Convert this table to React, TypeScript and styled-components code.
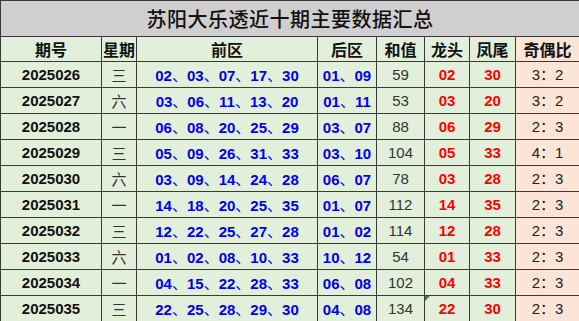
import styled, { createGlobalStyle, css } from "styled-components";

const GlobalStyle = createGlobalStyle`
  body {
    margin: 0;
    background: #fff;
    font-family: "Liberation Sans", "Noto Sans CJK SC", sans-serif;
  }
`;

const Table = styled.table`
  border-collapse: collapse;
  table-layout: fixed;
  width: 579px;
`;

const TitleCell = styled.td`
  height: 35px;
  padding: 0;
  background: #d0cece;
  border: 1px solid #3a3a3a;
  text-align: center;
  font-family: "Noto Sans CJK SC", sans-serif;
  font-size: 20px;
  font-weight: 500;
  color: #111;
  letter-spacing: 0.5px;
`;

const HeadCell = styled.th<{ $pink?: boolean }>`
  height: 24px;
  padding: 0;
  background: ${(p) => (p.$pink ? "#fce4d6" : "#e2efda")};
  border: 1px solid #3a3a3a;
  text-align: center;
  font-family: "Noto Sans CJK SC", sans-serif;
  font-size: 16px;
  font-weight: 700;
  color: #111;
  line-height: 1;
`;

type Tone = "date" | "week" | "blue" | "sum" | "red" | "ratio";

const toneStyles: Record<Tone, ReturnType<typeof css>> = {
  date: css`
    color: #111;
    font-weight: 700;
  `,
  week: css`
    color: #333;
    font-family: "Noto Sans CJK SC", sans-serif;
    font-weight: 400;
  `,
  blue: css`
    color: #0000f0;
    font-weight: 700;
  `,
  sum: css`
    color: #333;
    font-weight: 400;
  `,
  red: css`
    color: #ff0000;
    font-weight: 700;
  `,
  ratio: css`
    color: #222;
    font-weight: 400;
  `,
};

const Cell = styled.td<{ $tone: Tone; $pink?: boolean; $note?: boolean }>`
  position: relative;
  height: 25px;
  padding: 0;
  background: ${(p) => (p.$pink ? "#fce4d6" : "#e2efda")};
  border: 1px solid #3a3a3a;
  text-align: center;
  font-size: 15px;
  line-height: 1;
  white-space: nowrap;
  ${(p) => toneStyles[p.$tone]}

  ${(p) =>
    p.$note &&
    css`
      &::before {
        content: "";
        position: absolute;
        left: 0;
        top: 0;
        border-top: 5px solid #2e8b2e;
        border-right: 5px solid transparent;
      }
    `}
`;

const Sep = styled.span`
  font-family: "Noto Sans CJK SC", sans-serif;
  font-weight: 400;
`;

type Row = {
  issue: string;
  week: string;
  front: string[];
  back: string[];
  sum: number;
  head: string;
  tail: string;
  ratio: string;
};

const rows: Row[] = [
  { issue: "2025026", week: "三", front: ["02", "03", "07", "17", "30"], back: ["01", "09"], sum: 59, head: "02", tail: "30", ratio: "3：2" },
  { issue: "2025027", week: "六", front: ["03", "06", "11", "13", "20"], back: ["01", "11"], sum: 53, head: "03", tail: "20", ratio: "3：2" },
  { issue: "2025028", week: "一", front: ["06", "08", "20", "25", "29"], back: ["03", "07"], sum: 88, head: "06", tail: "29", ratio: "2：3" },
  { issue: "2025029", week: "三", front: ["05", "09", "26", "31", "33"], back: ["03", "10"], sum: 104, head: "05", tail: "33", ratio: "4：1" },
  { issue: "2025030", week: "六", front: ["03", "09", "14", "24", "28"], back: ["06", "07"], sum: 78, head: "03", tail: "28", ratio: "2：3" },
  { issue: "2025031", week: "一", front: ["14", "18", "20", "25", "35"], back: ["01", "07"], sum: 112, head: "14", tail: "35", ratio: "2：3" },
  { issue: "2025032", week: "三", front: ["12", "22", "25", "27", "28"], back: ["01", "02"], sum: 114, head: "12", tail: "28", ratio: "2：3" },
  { issue: "2025033", week: "六", front: ["01", "02", "08", "10", "33"], back: ["10", "12"], sum: 54, head: "01", tail: "33", ratio: "2：3" },
  { issue: "2025034", week: "一", front: ["04", "15", "22", "28", "33"], back: ["06", "08"], sum: 102, head: "04", tail: "33", ratio: "2：3" },
  { issue: "2025035", week: "三", front: ["22", "25", "28", "29", "30"], back: ["04", "08"], sum: 134, head: "22", tail: "30", ratio: "2：3" },
];

const widths = [101, 35, 181, 59, 48, 45, 46, 64];

const joinNums = (nums: string[]) =>
  nums.map((n, i) => (
    <span key={i}>
      {i > 0 && <Sep>、</Sep>}
      {n}
    </span>
  ));

const App = () => {
  return (
    <>
      <GlobalStyle />
      <Table>
        <colgroup>
          {widths.map((w, i) => (
            <col key={i} style={{ width: w }} />
          ))}
        </colgroup>
        <tbody>
          <tr>
            <TitleCell colSpan={8}>苏阳大乐透近十期主要数据汇总</TitleCell>
          </tr>
          <tr>
            <HeadCell>期号</HeadCell>
            <HeadCell>星期</HeadCell>
            <HeadCell>前区</HeadCell>
            <HeadCell>后区</HeadCell>
            <HeadCell>和值</HeadCell>
            <HeadCell>龙头</HeadCell>
            <HeadCell>凤尾</HeadCell>
            <HeadCell $pink>奇偶比</HeadCell>
          </tr>
          {rows.map((r, i) => (
            <tr key={r.issue}>
              <Cell $tone="date">{r.issue}</Cell>
              <Cell $tone="week">{r.week}</Cell>
              <Cell $tone="blue">{joinNums(r.front)}</Cell>
              <Cell $tone="blue">{joinNums(r.back)}</Cell>
              <Cell $tone="sum">{r.sum}</Cell>
              <Cell $tone="red" $note={i === rows.length - 1}>
                {r.head}
              </Cell>
              <Cell $tone="red">{r.tail}</Cell>
              <Cell $tone="ratio" $pink>
                {r.ratio}
              </Cell>
            </tr>
          ))}
        </tbody>
      </Table>
    </>
  );
};

export default App;
